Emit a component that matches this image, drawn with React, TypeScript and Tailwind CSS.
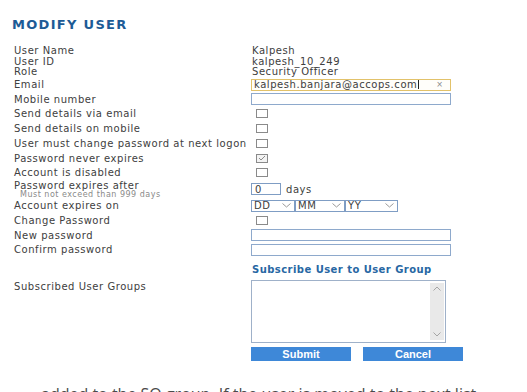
import React from "react";

const lbl =
  "font-['DejaVu_Sans',sans-serif] text-[10px] leading-[11px] tracking-[0.55px] text-[#404040]";

function Row({
  label,
  h,
  children,
  top = false,
}: {
  label?: React.ReactNode;
  h: string;
  children?: React.ReactNode;
  top?: boolean;
}) {
  return (
    <div className={`flex ${top ? "items-start" : "items-center"} ${h}`}>
      <div className={`w-[237px] shrink-0 ${lbl}`}>{label}</div>
      <div className="flex items-center">{children}</div>
    </div>
  );
}

function Box({ checked = false }: { checked?: boolean }) {
  return (
    <div
      className={`ml-[5px] w-[12px] h-[9px] border border-[#8a8a8a] ${
        checked ? "bg-[#f3f3f3]" : "bg-white"
      } flex items-center justify-center`}
    >
      {checked && (
        <svg width="8" height="6" viewBox="0 0 8 6">
          <polyline points="1,3 3,5 7,1" fill="none" stroke="#8c8c8c" strokeWidth="1" />
        </svg>
      )}
    </div>
  );
}

function Chev() {
  return (
    <svg width="9" height="5" viewBox="0 0 9 5">
      <polyline points="0.5,0.5 4.5,4 8.5,0.5" fill="none" stroke="#9a9a9a" strokeWidth="1" />
    </svg>
  );
}

function Sel({ text, w }: { text: string; w: string }) {
  return (
    <div
      className={`${w} h-[12px] border border-[#7f9dc4] bg-white flex items-center justify-between pl-[2px] pr-[3px] ${lbl}`}
    >
      <span>{text}</span>
      <Chev />
    </div>
  );
}

export default function App() {
  return (
    <div className="w-[527px] h-[392px] overflow-hidden bg-white relative">
      <div className="pl-[12px] pt-[18px]">
        <div className="font-['DejaVu_Sans',sans-serif] font-bold text-[13px] leading-[14px] tracking-[1.3px] text-[#1d5b96]">
          MODIFY USER
        </div>
      </div>
      <div className="pl-[14px] mt-[13px]">
        <Row label="User Name" h="h-[11px]">
          <span className={`${lbl} pl-[1px]`}>Kalpesh</span>
        </Row>
        <Row label="User ID" h="h-[10px]">
          <span className={`${lbl} pl-[1px]`}>kalpesh_10_249</span>
        </Row>
        <Row label="Role" h="h-[11px]">
          <span className={`${lbl} pl-[1px]`}>Security Officer</span>
        </Row>
        <Row label="Email" h="h-[15px]">
          <div className="w-[200px] h-[12px] border border-[#e2c26a] bg-[#fffefa] flex items-center justify-between pl-[2px] pr-[7px]">
            <span className={`${lbl} text-[#222] flex items-center`}>
              kalpesh.banjara@accops.com
              <span className="inline-block w-[1px] h-[9px] bg-[#222] ml-[1px]" />
            </span>
            <span className="font-['DejaVu_Sans',sans-serif] text-[8px] leading-[8px] text-[#888]">×</span>
          </div>
        </Row>
        <Row label="Mobile number" h="h-[14px]">
          <div className="w-[200px] h-[12px] border border-[#8ea9cc] bg-white" />
        </Row>
        <Row label="Send details via email" h="h-[15px]">
          <Box />
        </Row>
        <Row label="Send details on mobile" h="h-[15px]">
          <Box />
        </Row>
        <Row label="User must change password at next logon" h="h-[15px]">
          <Box />
        </Row>
        <Row label="Password never expires" h="h-[14px]">
          <Box checked />
        </Row>
        <Row label="Account is disabled" h="h-[15px]">
          <Box />
        </Row>
        <Row
          label={
            <div className="flex flex-col">
              <span>Password expires after</span>
              <span className="ml-[6px] text-[8px] leading-[8px] tracking-[0.5px] text-[#8a8a8a]">
                Must not exceed than 999 days
              </span>
            </div>
          }
          h="h-[18px]"
        >
          <div className={`w-[30px] h-[12px] border border-[#7f9dc4] bg-white pl-[3px] flex items-center ${lbl}`}>
            0
          </div>
          <span className={`${lbl} ml-[5px]`}>days</span>
        </Row>
        <Row label="Account expires on" h="h-[15px]">
          <Sel text="DD" w="w-[44px]" />
          <Sel text="MM" w="w-[50px]" />
          <Sel text="YY" w="w-[53px]" />
        </Row>
        <Row label="Change Password" h="h-[15px]">
          <Box />
        </Row>
        <Row label="New password" h="h-[14px]">
          <div className="w-[200px] h-[12px] border border-[#8ea9cc] bg-white" />
        </Row>
        <Row label="Confirm password" h="h-[15px]">
          <div className="w-[200px] h-[12px] border border-[#8ea9cc] bg-white" />
        </Row>
        <div className="flex items-center h-[13px] mt-[6px]">
          <div className="w-[237px] shrink-0" />
          <span className="font-['DejaVu_Sans',sans-serif] font-bold text-[10px] leading-[11px] tracking-[0.45px] text-[#2767a3] pl-[1px]">
            Subscribe User to User Group
          </span>
        </div>
        <div className="flex items-start mt-[4px]">
          <div className={`w-[237px] shrink-0 pt-[1px] ${lbl}`}>Subscribed User Groups</div>
          <div className="flex flex-col">
            <div className="w-[195px] h-[63px] border border-[#9fb1c9] bg-white flex justify-end">
              <div className="w-[14px] my-[2px] mr-[1px] bg-[#e9e9e9] flex flex-col items-center justify-between py-[3px]">
                <svg width="8" height="5" viewBox="0 0 8 5">
                  <polyline points="0.5,4.5 4,1 7.5,4.5" fill="none" stroke="#a5a5a5" strokeWidth="1" />
                </svg>
                <svg width="8" height="5" viewBox="0 0 8 5">
                  <polyline points="0.5,0.5 4,4 7.5,0.5" fill="none" stroke="#a5a5a5" strokeWidth="1" />
                </svg>
              </div>
            </div>
            <div className="flex gap-[12px] mt-[4px]">
              <div className="w-[100px] h-[14px] bg-[#3e88d8] flex items-center justify-center font-['Liberation_Sans',sans-serif] font-bold text-[11px] leading-[12px] text-white">
                Submit
              </div>
              <div className="w-[100px] h-[14px] bg-[#3e88d8] flex items-center justify-center font-['Liberation_Sans',sans-serif] font-bold text-[11px] leading-[12px] text-white">
                Cancel
              </div>
            </div>
          </div>
        </div>
      </div>
      <div className="pl-[41px] mt-[22px] font-['Open_Sans',sans-serif] text-[16px] leading-[22px] text-[#4a4a4a] whitespace-nowrap">
        added to the SO group. If the user is moved to the next list
      </div>
    </div>
  );
}
